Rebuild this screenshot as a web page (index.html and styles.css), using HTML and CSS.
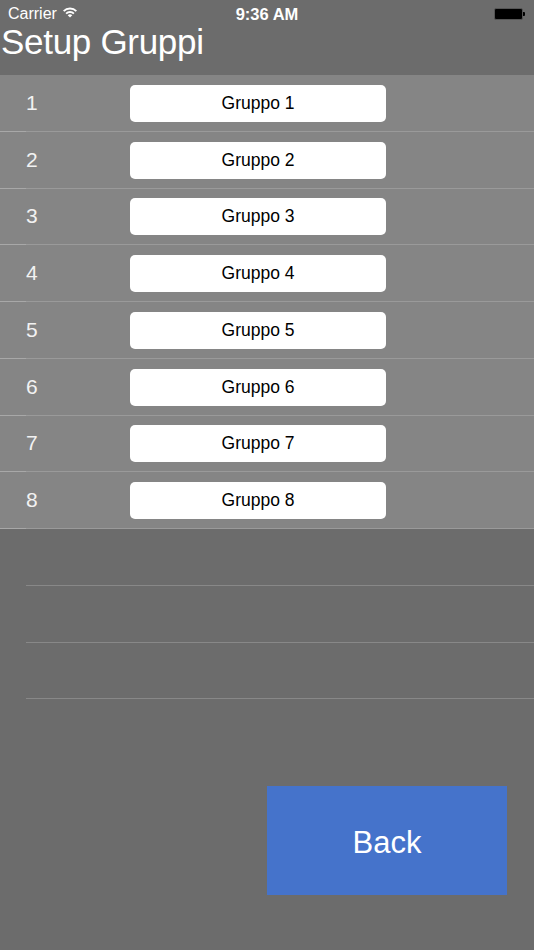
FILE: index.html
```html
<!DOCTYPE html>
<html>
<head>
<meta charset="utf-8">
<link rel="stylesheet" href="styles.css">
</head>
<body>
<div class="screen">
  <div class="statusbar">
    <div class="sb-left">
      <span class="carrier">Carrier</span>
      <svg class="wifi" width="14" height="11" viewBox="0 0 14 11">
        <path d="M7 10.6 L4.7 8.3 A3.25 3.25 0 0 1 9.3 8.3 Z" fill="#fff"/>
        <path d="M3.11 6.61 A5.5 5.5 0 0 1 10.89 6.61" fill="none" stroke="#fff" stroke-width="1.9"/>
        <path d="M0.64 4.14 A9 9 0 0 1 13.36 4.14" fill="none" stroke="#fff" stroke-width="1.9"/>
      </svg>
    </div>
    <div class="sb-time">9:36 AM</div>
    <div class="sb-right">
      <div class="battery"><div class="battery-fill"></div></div>
      <div class="battery-tip"></div>
    </div>
  </div>
  <div class="title">Setup Gruppi</div>
  <div class="list">
    <div class="row"><span class="num">1</span><div class="field">Gruppo 1</div></div>
    <div class="row"><span class="num">2</span><div class="field">Gruppo 2</div></div>
    <div class="row"><span class="num">3</span><div class="field">Gruppo 3</div></div>
    <div class="row"><span class="num">4</span><div class="field">Gruppo 4</div></div>
    <div class="row"><span class="num">5</span><div class="field">Gruppo 5</div></div>
    <div class="row"><span class="num">6</span><div class="field">Gruppo 6</div></div>
    <div class="row"><span class="num">7</span><div class="field">Gruppo 7</div></div>
    <div class="row"><span class="num">8</span><div class="field">Gruppo 8</div></div>
  </div>
  <div class="empty">
    <div class="erow"></div>
    <div class="erow"></div>
    <div class="erow"></div>
  </div>
  <div class="footer">
    <div class="back">Back</div>
  </div>
</div>
</body>
</html>
```

FILE: styles.css
```css
* { box-sizing: border-box; }
html, body {
  margin: 0;
  padding: 0;
  background: #6c6c6c;
}
body {
  width: 534px;
  height: 950px;
  overflow: hidden;
  font-family: "Liberation Sans", Arial, sans-serif;
}
.screen {
  width: 534px;
  height: 950px;
  display: flex;
  flex-direction: column;
  background: #6c6c6c;
}
.statusbar {
  height: 28px;
  display: flex;
  align-items: center;
  justify-content: space-between;
  padding: 0 9px 0 8px;
  color: #fff;
  font-size: 16px;
  position: relative;
}
.sb-left {
  display: flex;
  align-items: center;
  gap: 6px;
}
.carrier { color: #fff; }
.wifi { margin-top: -3px; }
.sb-time {
  position: absolute;
  left: 0;
  right: 0;
  text-align: center;
  font-weight: bold;
  font-size: 16.5px;
  pointer-events: none;
}
.sb-right {
  display: flex;
  align-items: center;
  margin-top: -1px;
}
.battery {
  width: 29px;
  height: 12px;
  border: 1px solid #555;
  border-radius: 2px;
  background: #000;
}
.battery-tip {
  width: 2px;
  height: 4px;
  background: #000;
  border-radius: 0 1px 1px 0;
}
.title {
  height: 47px;
  color: #fff;
  font-size: 35px;
  line-height: 28px;
  padding-left: 1px;
  letter-spacing: -0.3px;
}
.list {
  background: #858585;
}
.row {
  height: 56.75px;
  display: flex;
  align-items: center;
  position: relative;
  border-bottom: 1px solid #9a9a9a;
}
.row::after {
  content: "";
  position: absolute;
  left: 0;
  bottom: -1px;
  width: 26px;
  height: 1px;
  background: #a8a8a8;
}
.num {
  width: 130px;
  padding-left: 26px;
  color: #f2f2f2;
  font-size: 21px;
}
.field {
  width: 256px;
  height: 37px;
  background: #fff;
  border-radius: 5px;
  display: flex;
  align-items: center;
  justify-content: center;
  color: #000;
  font-size: 17.5px;
  margin-top: 1px;
}
.empty {
  padding-left: 26px;
}
.erow {
  height: 56.75px;
  border-bottom: 1px solid #888;
}
.footer {
  display: flex;
  justify-content: flex-end;
  padding-right: 27px;
  padding-top: 87px;
}
.back {
  width: 240px;
  height: 109px;
  background: #4573cb;
  color: #fff;
  font-size: 31px;
  display: flex;
  align-items: center;
  justify-content: center;
  padding-top: 4px;
}
```
